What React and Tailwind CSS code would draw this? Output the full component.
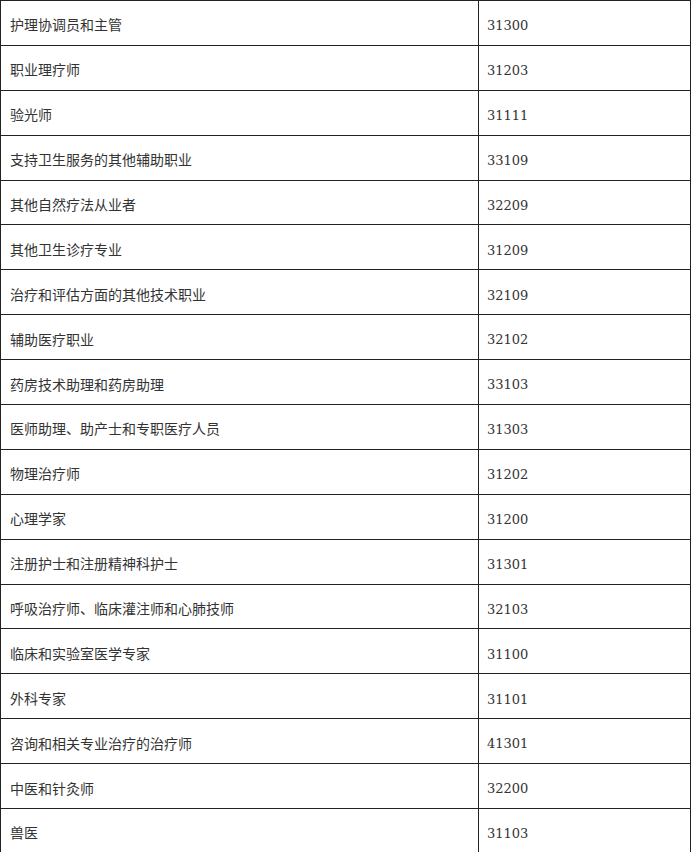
import React from 'react'

const rows = [
  ['护理协调员和主管', '31300'],
  ['职业理疗师', '31203'],
  ['验光师', '31111'],
  ['支持卫生服务的其他辅助职业', '33109'],
  ['其他自然疗法从业者', '32209'],
  ['其他卫生诊疗专业', '31209'],
  ['治疗和评估方面的其他技术职业', '32109'],
  ['辅助医疗职业', '32102'],
  ['药房技术助理和药房助理', '33103'],
  ['医师助理、助产士和专职医疗人员', '31303'],
  ['物理治疗师', '31202'],
  ['心理学家', '31200'],
  ['注册护士和注册精神科护士', '31301'],
  ['呼吸治疗师、临床灌注师和心肺技师', '32103'],
  ['临床和实验室医学专家', '31100'],
  ['外科专家', '31101'],
  ['咨询和相关专业治疗的治疗师', '41301'],
  ['中医和针灸师', '32200'],
  ['兽医', '31103'],
]

const App = () => {
  return (
    <div className="w-[692px] h-[852px] overflow-hidden bg-white">
      <table
        className="w-[691px] border-collapse text-[#333] text-[14px]"
        style={{ fontFamily: '"DejaVu Serif", "Noto Sans CJK SC", serif' }}
      >
        <tbody>
          {rows.map((row, i) => (
            <tr key={i} className="h-[44.9px]">
              <td className="w-[478px] border border-[#222] pl-[9px] pt-[6px] align-middle">
                {row[0]}
              </td>
              <td className="border border-[#222] pl-[8px] pt-[6px] align-middle text-[13px]">
                {row[1]}
              </td>
            </tr>
          ))}
        </tbody>
      </table>
    </div>
  )
}

export default App
